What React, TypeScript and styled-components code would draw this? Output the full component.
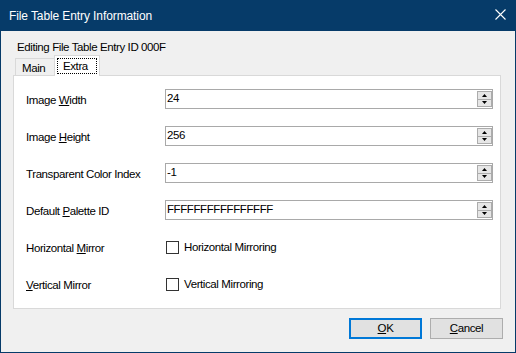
import styled, { createGlobalStyle } from 'styled-components'

const GlobalStyle = createGlobalStyle`
  html, body {
    margin: 0;
    padding: 0;
    background: #f0f0f0;
  }
  body {
    font-family: "Liberation Sans", Arial, sans-serif;
    font-size: 11.5px;
    letter-spacing: -0.4px;
    color: #000;
  }
`

const navy = '#063b69'

type FieldRow =
  | { kind: 'spin'; label: React.ReactNode; value: string }
  | { kind: 'check'; label: React.ReactNode; text: string }

const rows: FieldRow[] = [
  { kind: 'spin', label: <>Image <u>W</u>idth</>, value: '24' },
  { kind: 'spin', label: <>Image <u>H</u>eight</>, value: '256' },
  { kind: 'spin', label: 'Transparent Color Index', value: '-1' },
  { kind: 'spin', label: <>Default <u>P</u>alette ID</>, value: 'FFFFFFFFFFFFFFFF' },
  { kind: 'check', label: <>Horizontal <u>M</u>irror</>, text: 'Horizontal Mirroring' },
  { kind: 'check', label: <><u>V</u>ertical Mirror</>, text: 'Vertical Mirroring' },
]

function SpinBox({ value }: { value: string }) {
  return (
    <SpinField>
      <SpinValue>{value}</SpinValue>
      <Spinner>
        <SpinHalf>
          <svg width="5" height="3" viewBox="0 0 5 3">
            <path d="M2.5 0 L5 3 L0 3 Z" fill="#000" />
          </svg>
        </SpinHalf>
        <SpinHalf $bottom>
          <svg width="5" height="3" viewBox="0 0 5 3">
            <path d="M0 0 L5 0 L2.5 3 Z" fill="#000" />
          </svg>
        </SpinHalf>
      </Spinner>
    </SpinField>
  )
}

export default function App() {
  return (
    <>
      <GlobalStyle />
      <Window>
        <TitleBar>
          <Title>File Table Entry Information</Title>
          <CloseButton aria-label="Close">
            <svg width="11" height="11" viewBox="0 0 11 11">
              <path d="M0.5 0.5 L10.5 10.5 M10.5 0.5 L0.5 10.5" stroke="#fff" strokeWidth="1.1" />
            </svg>
          </CloseButton>
        </TitleBar>
        <Body>
          <Heading>Editing File Table Entry ID 000F</Heading>
          <TabStrip>
            <Tab>Main</Tab>
            <Tab $active>
              <FocusRect>Extra</FocusRect>
            </Tab>
          </TabStrip>
          <Panel>
            {rows.map((row, i) => (
              <Row key={i}>
                <Label>{row.label}</Label>
                {row.kind === 'spin' ? (
                  <SpinBox value={row.value} />
                ) : (
                  <CheckLine>
                    <CheckBox />
                    <span>{row.text}</span>
                  </CheckLine>
                )}
              </Row>
            ))}
          </Panel>
          <Footer>
            <Button $default>
              <u>O</u>K
            </Button>
            <Button>
              <u>C</u>ancel
            </Button>
          </Footer>
        </Body>
      </Window>
    </>
  )
}

const Window = styled.div`
  width: 516px;
  height: 353px;
  box-sizing: border-box;
  border: 1px solid ${navy};
  border-top: 0;
  display: flex;
  flex-direction: column;
  background: #f0f0f0;
`

const TitleBar = styled.div`
  height: 31px;
  margin: 0 -1px;
  background: ${navy};
  color: #fff;
  display: flex;
  align-items: center;
  justify-content: space-between;
  padding-left: 9px;
`

const Title = styled.span`
  padding-top: 1px;
  font-size: 12px;
  letter-spacing: -0.1px;
`

const CloseButton = styled.div`
  width: 31px;
  height: 31px;
  display: flex;
  align-items: center;
  justify-content: center;
  padding-bottom: 2px;
  box-sizing: border-box;
`

const Body = styled.div`
  flex: 1;
  display: flex;
  flex-direction: column;
  padding: 9px 14px 0 12px;
`

const Heading = styled.div`
  line-height: 15px;
  margin-left: 4px;
`

const TabStrip = styled.div`
  display: flex;
  align-items: flex-end;
  height: 20px;
  padding-left: 2px;
`

const Tab = styled.div<{ $active?: boolean }>`
  box-sizing: border-box;
  height: ${({ $active }) => ($active ? '21px' : '17px')};
  margin-bottom: ${({ $active }) => ($active ? '-1px' : '0')};
  width: ${({ $active }) => ($active ? '46px' : '40px')};
  margin-left: ${({ $active }) => ($active ? '-1px' : '0')};
  position: relative;
  z-index: ${({ $active }) => ($active ? 1 : 0)};
  background: ${({ $active }) => ($active ? '#fff' : '#f0f0f0')};
  border: 1px solid #d9d9d9;
  border-bottom: 0;
  padding: ${({ $active }) => ($active ? '2px 2px 0' : '2px 0 0 6px')};
  line-height: 15px;
`

const FocusRect = styled.div`
  border: 1px dotted #000;
  height: 16px;
  box-sizing: border-box;
  padding-left: 5px;
  line-height: 14px;
`

const Panel = styled.div`
  height: 234px;
  box-sizing: border-box;
  background: #fff;
  border: 1px solid #d9d9d9;
  padding: 12px 7px 0 12px;
  display: grid;
  grid-auto-rows: 20px;
  row-gap: 17px;
`

const Row = styled.div`
  display: grid;
  grid-template-columns: 139px 1fr;
  align-items: center;
`

const Label = styled.div`
  line-height: 20px;
  padding-top: 2px;
`

const SpinField = styled.div`
  height: 20px;
  box-sizing: border-box;
  border: 1px solid #a9a9a9;
  display: flex;
  align-items: center;
`

const SpinValue = styled.span`
  flex: 1;
  line-height: 16px;
  padding-left: 1px;
  align-self: flex-start;
`

const Spinner = styled.div`
  width: 15px;
  height: 16px;
  display: flex;
  flex-direction: column;
`

const SpinHalf = styled.div<{ $bottom?: boolean }>`
  flex: 1;
  box-sizing: border-box;
  background: #e6e6e6;
  border: 1px solid #acacac;
  border-top: ${({ $bottom }) => ($bottom ? '0' : '1px solid #acacac')};
  display: flex;
  align-items: center;
  justify-content: center;
`

const CheckLine = styled.label`
  display: flex;
  align-items: center;
  gap: 5px;
  padding-left: 1px;
  line-height: 20px;
`

const CheckBox = styled.span`
  width: 13px;
  height: 13px;
  box-sizing: border-box;
  border: 1px solid #333;
  background: #fff;
`

const Footer = styled.div`
  display: flex;
  justify-content: flex-end;
  gap: 8px;
  margin-top: 9px;
  margin-right: -2px;
`

const Button = styled.div<{ $default?: boolean }>`
  width: 73px;
  height: 21px;
  box-sizing: border-box;
  background: #e1e1e1;
  border: ${({ $default }) => ($default ? '2px solid #0078d7' : '1px solid #adadad')};
  display: flex;
  align-items: center;
  justify-content: center;
  line-height: 15px;
`
